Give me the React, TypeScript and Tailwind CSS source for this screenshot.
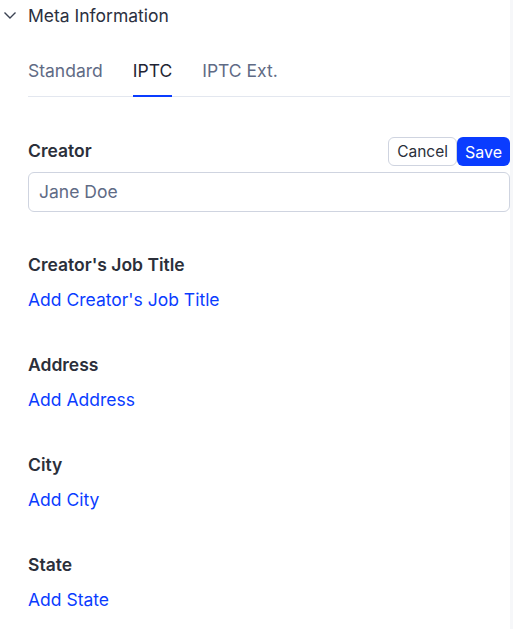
import React from "react";

const fields = [
  { label: "Creator's Job Title", link: "Add Creator's Job Title" },
  { label: "Address", link: "Add Address" },
  { label: "City", link: "Add City" },
  { label: "State", link: "Add State" },
];

export default function App() {
  return (
    <div
      className="flex items-start w-[513px] h-[629px] overflow-hidden bg-white"
      style={{ fontFamily: "Inter, 'Noto Sans', sans-serif" }}
    >
      <div className="w-[510px] flex flex-col shrink-0">
        <div className="h-[32px] shrink-0 flex items-center">
          <svg width="28" height="32" viewBox="0 0 28 32" className="shrink-0">
            <path d="M4.5 12.5 L10 18 L15.5 12.5" fill="none" stroke="#3b4252" strokeWidth="1.4" />
          </svg>
          <span className="text-[17.5px] text-[#2b3040]">Meta Information</span>
        </div>
        <div className="ml-[28px] mt-[20px] shrink-0 flex gap-[30px] border-b border-[#e3e7ef] h-[45px]">
          <div className="flex items-center pb-[6px] text-[17.5px] text-[#5f6b85]">Standard</div>
          <div className="flex items-center pb-[4px] text-[17.5px] text-[#1f2433] border-b-2 border-[#0a3cff] -mb-px">IPTC</div>
          <div className="flex items-center pb-[6px] text-[17.5px] text-[#5f6b85]">IPTC Ext.</div>
        </div>
        <div className="ml-[28px] mt-[40px] shrink-0 flex items-center justify-between h-[29px]">
          <span className="text-[17.5px] font-semibold text-[#2b2f3a]">Creator</span>
          <div className="flex h-[29px]">
            <button className="h-[29px] px-[8px] border border-[#cfd4e0] rounded-[6px] text-[15.5px] text-[#2b2f3a] bg-white">Cancel</button>
            <button className="h-[29px] px-[8px] rounded-[6px] text-[16px] text-white bg-[#0a3cff]">Save</button>
          </div>
        </div>
        <div className="ml-[28px] mt-[6px] shrink-0 h-[40px] border border-[#cfd4e0] rounded-[6px] flex items-center px-[10px] text-[17.5px] text-[#5f6b85]">
          Jane Doe
        </div>
        <div className="ml-[28px] mt-[41px] shrink-0 flex flex-col">
          {fields.map((f) => (
            <div key={f.label} className="flex flex-col h-[100px] shrink-0">
              <div className="h-[24px] flex items-center text-[17.5px] font-semibold text-[#2b2f3a]">{f.label}</div>
              <div className="mt-[11px] h-[24px] flex items-center text-[17.5px] text-[#0a3cff]">{f.link}</div>
            </div>
          ))}
        </div>
      </div>
      <div className="w-[3px] h-[629px] shrink-0 bg-[#f6f7f9]" />
    </div>
  );
}
